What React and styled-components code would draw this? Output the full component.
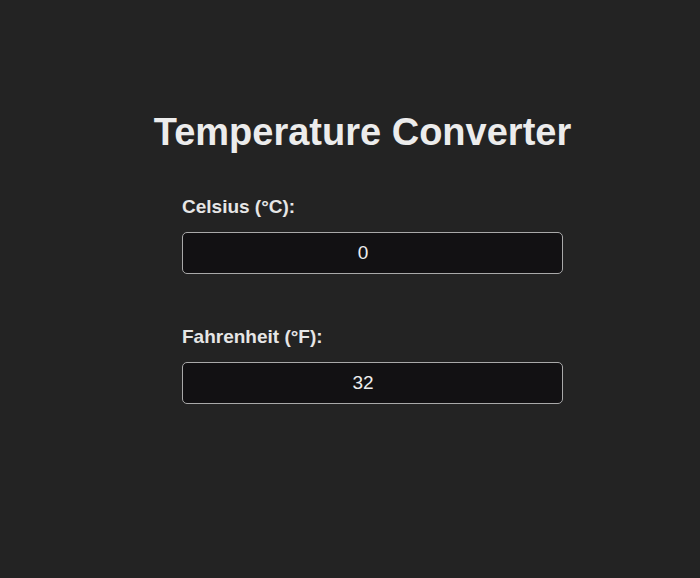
import React, { useState } from 'react'
import styled, { createGlobalStyle } from 'styled-components'

const GlobalStyle = createGlobalStyle`
    html, body {
        margin:0;
        padding:0;
        background:#232323;
    }
    body {
        font-family:"Liberation Sans", Arial, sans-serif;
        color:#e6e6e6;
    }
`
const Page = styled.div`
    height:578px;
    width:700px;
    display:flex;
    justify-content:center;
    padding-left:25px;
    box-sizing:border-box;
`
const Card = styled.div`
    width:440px;
    display:flex;
    flex-direction:column;
    align-items:center;
    padding-top:111px;
`
const Title = styled.h1`
    margin:0;
    font-size:38px;
    font-weight:700;
    color:#ececec;
    white-space:nowrap;
`
const Form = styled.div`
    width:381px;
    margin-top:42px;
    margin-left:20px;
    display:flex;
    flex-direction:column;
    gap:52px;
`
const Field = styled.div`
    display:flex;
    flex-direction:column;
    gap:14px;
`
const Label = styled.label`
    font-size:19px;
    font-weight:700;
    color:#e6e6e6;
`
const Input = styled.input`
    height:42px;
    width:100%;
    box-sizing:border-box;
    padding:0 19px 0 0;
    background:#121113;
    border:1px solid #a9a9a9;
    border-radius:5px;
    color:#ededed;
    font-family:"Liberation Sans", Arial, sans-serif;
    font-size:19px;
    text-align:center;
    outline:none;
`

function App() {
    const [celsius, setCelsius] = useState("0")
    const [fahrenheit, setFahrenheit] = useState("32")

    const onCelsius = (e) => {
        const v = e.target.value
        setCelsius(v)
        const n = parseFloat(v)
        setFahrenheit(isNaN(n) ? "" : String(Math.round((n * 9 / 5 + 32) * 100) / 100))
    }
    const onFahrenheit = (e) => {
        const v = e.target.value
        setFahrenheit(v)
        const n = parseFloat(v)
        setCelsius(isNaN(n) ? "" : String(Math.round(((n - 32) * 5 / 9) * 100) / 100))
    }

    return (
        <>
            <GlobalStyle />
            <Page>
                <Card>
                    <Title>Temperature Converter</Title>
                    <Form>
                        <Field>
                            <Label>Celsius (°C):</Label>
                            <Input value={celsius} onChange={onCelsius} />
                        </Field>
                        <Field>
                            <Label>Fahrenheit (°F):</Label>
                            <Input value={fahrenheit} onChange={onFahrenheit} />
                        </Field>
                    </Form>
                </Card>
            </Page>
        </>
    )
}

export default App
